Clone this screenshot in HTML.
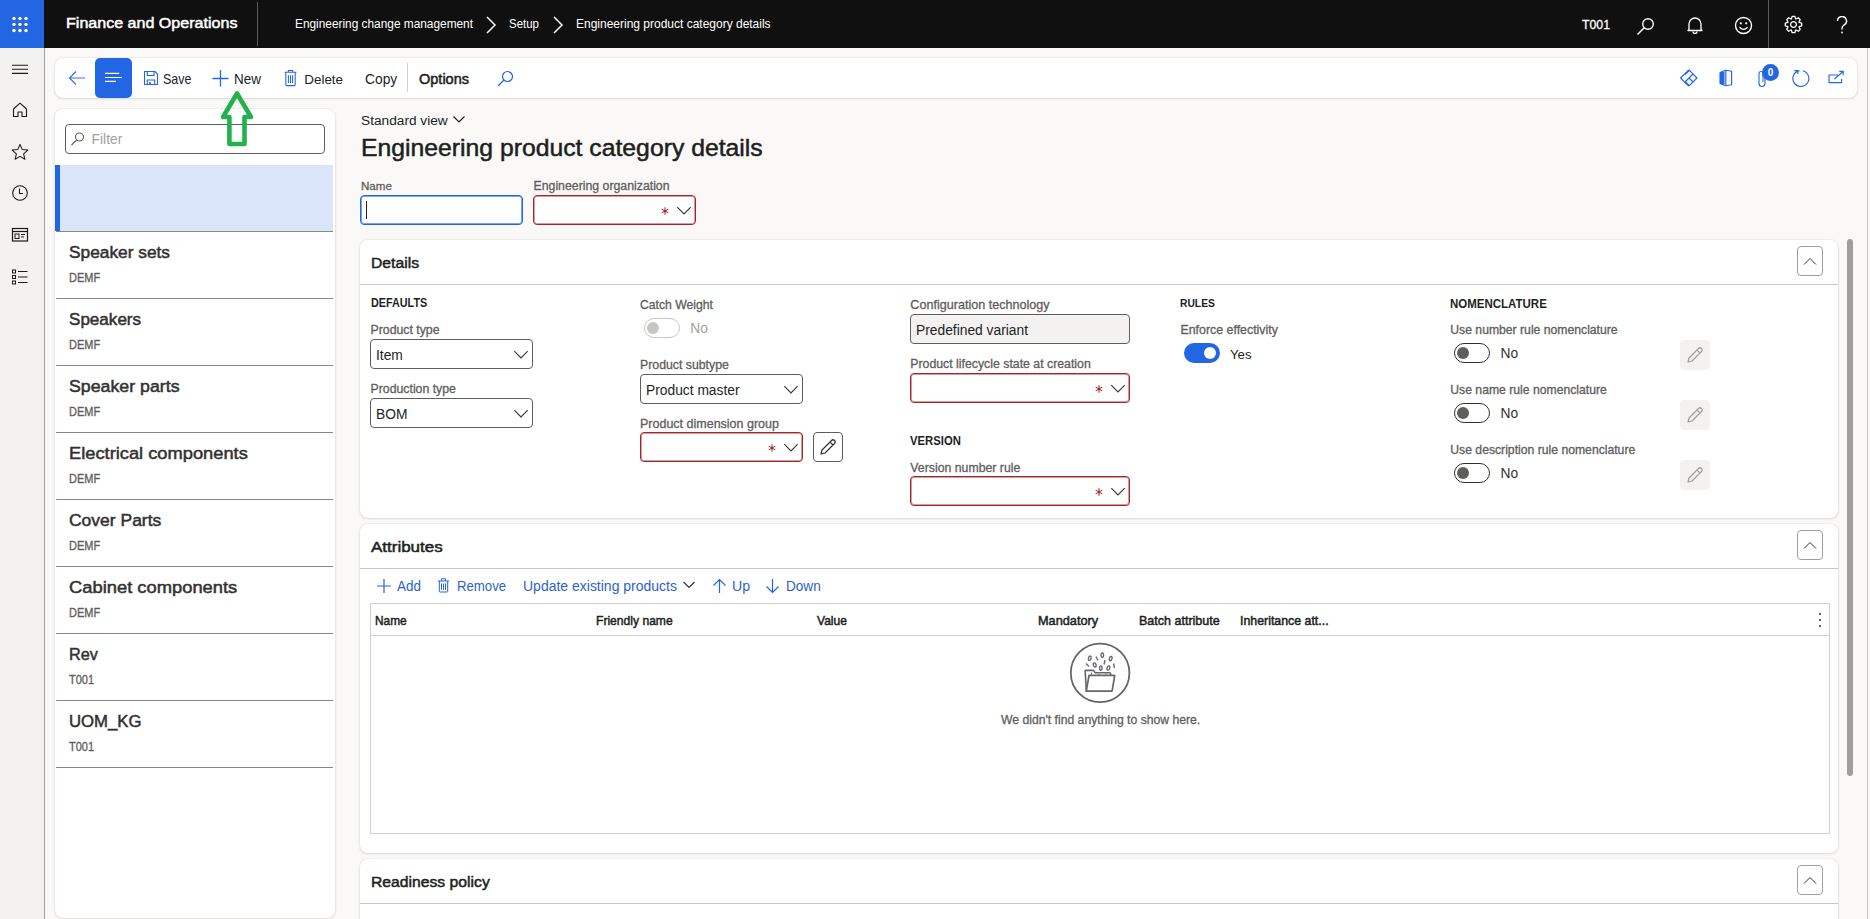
<!DOCTYPE html>
<html><head><meta charset="utf-8">
<style>
*{box-sizing:border-box;margin:0;padding:0}
html,body{width:1870px;height:919px;overflow:hidden;background:#faf9f8;font-family:"Liberation Sans",sans-serif;color:#201f1e;position:relative}
.a{position:absolute}
.t{position:absolute;white-space:nowrap;line-height:1}
.card{position:absolute;background:#fff;border-radius:8px;box-shadow:0 0 2px rgba(0,0,0,.12),0 1px 3px rgba(0,0,0,.10)}
</style></head><body>
<div class="a" style="left:0px;top:0px;width:1870px;height:48px;background:#111010"></div>
<div class="a" style="left:0px;top:0px;width:44px;height:48px;background:#2266e3"></div>
<svg class="a" style="left:0px;top:0px;" width="44" height="48" viewBox="0 0 44 48"><circle cx="14" cy="18.5" r="1.7" fill="#fff"/><circle cx="14" cy="24.5" r="1.7" fill="#fff"/><circle cx="14" cy="30.5" r="1.7" fill="#fff"/><circle cx="20" cy="18.5" r="1.7" fill="#fff"/><circle cx="20" cy="24.5" r="1.7" fill="#fff"/><circle cx="20" cy="30.5" r="1.7" fill="#fff"/><circle cx="26" cy="18.5" r="1.7" fill="#fff"/><circle cx="26" cy="24.5" r="1.7" fill="#fff"/><circle cx="26" cy="30.5" r="1.7" fill="#fff"/></svg>
<div class="t" style="left:66px;top:15.48px;font-size:15.5px;color:#fff;transform:scaleX(1.0363);transform-origin:0 0;-webkit-text-stroke:0.5px #fff;">Finance and Operations</div>
<div class="a" style="left:257px;top:2px;width:1px;height:44px;background:#5a5a5a"></div>
<div class="t" style="left:295px;top:18.00px;font-size:12.4px;color:#fff;transform:scaleX(0.9571);transform-origin:0 0;">Engineering change management</div>
<svg class="a" style="left:484px;top:16px;" width="14" height="18" viewBox="0 0 14 18"><path d="M3 1 L11 9 L3 17" fill="none" stroke="#fff" stroke-width="1.5"/></svg>
<div class="t" style="left:509px;top:18.00px;font-size:12.4px;color:#fff;transform:scaleX(0.9266);transform-origin:0 0;">Setup</div>
<svg class="a" style="left:551px;top:16px;" width="14" height="18" viewBox="0 0 14 18"><path d="M3 1 L11 9 L3 17" fill="none" stroke="#fff" stroke-width="1.5"/></svg>
<div class="t" style="left:576px;top:18.00px;font-size:12.4px;color:#fff;transform:scaleX(0.9676);transform-origin:0 0;">Engineering product category details</div>
<div class="t" style="left:1582px;top:18.35px;font-size:13.530000000000001px;color:#fff;-webkit-text-stroke:0.3px #fff;transform:scaleX(0.9091);transform-origin:0 0;">T001</div>
<svg class="a" style="left:1636px;top:16px;" width="20" height="20" viewBox="0 0 20 20"><circle cx="12" cy="8" r="5.3" fill="none" stroke="#fff" stroke-width="1.4"/><path d="M8.2 11.8 L1.5 18.5" stroke="#fff" stroke-width="1.5"/></svg>
<svg class="a" style="left:1686px;top:16px;" width="18" height="18" viewBox="0 0 18 18"><path d="M3 13.5 V8 A6 6 0 0 1 15 8 V13.5 L16 14.5 H2 Z" fill="none" stroke="#fff" stroke-width="1.3" stroke-linejoin="round"/><path d="M7 15.5 A2 2 0 0 0 11 15.5" fill="none" stroke="#fff" stroke-width="1.3"/></svg>
<svg class="a" style="left:1734px;top:16px;" width="20" height="20" viewBox="0 0 20 20"><circle cx="9.5" cy="9.5" r="8" fill="none" stroke="#fff" stroke-width="1.4"/><circle cx="6.8" cy="7.3" r="1.1" fill="#fff"/><circle cx="12.2" cy="7.3" r="1.1" fill="#fff"/><path d="M5.5 11.2 Q9.5 15.5 13.5 11.2" fill="none" stroke="#fff" stroke-width="1.3"/></svg>
<div class="a" style="left:1768px;top:0px;width:1px;height:48px;background:#5a5a5a"></div>
<svg class="a" style="left:1784px;top:15.4px;" width="20" height="20" viewBox="0 0 20 20"><g transform="translate(9.5,9.5)" fill="none" stroke="#fff" stroke-width="1.3"><polygon points="8.19,-1.32 8.19,1.32 5.62,2.11 5.47,2.48 6.73,4.86 4.86,6.73 2.48,5.47 2.11,5.62 1.32,8.19 -1.32,8.19 -2.11,5.62 -2.48,5.47 -4.86,6.73 -6.73,4.86 -5.47,2.48 -5.62,2.11 -8.19,1.32 -8.19,-1.32 -5.62,-2.11 -5.47,-2.48 -6.73,-4.86 -4.86,-6.73 -2.48,-5.47 -2.11,-5.62 -1.32,-8.19 1.32,-8.19 2.11,-5.62 2.48,-5.47 4.86,-6.73 6.73,-4.86 5.47,-2.48 5.62,-2.11" stroke-linejoin="round"/><circle r="2.9"/></g></svg>
<svg class="a" style="left:1834px;top:16px;" width="16" height="18" viewBox="0 0 16 18"><path d="M3.5 5 A4.5 4.5 0 1 1 10 9 Q8 10.3 8 12.5 V13.5" fill="none" stroke="#fff" stroke-width="1.4"/><circle cx="8" cy="16.5" r="0.9" fill="#fff"/></svg>
<div class="a" style="left:0px;top:48px;width:45px;height:871px;background:#f3f2f1;border-right:1px solid #a19f9d"></div>
<svg class="a" style="left:10px;top:60px;" width="24" height="20" viewBox="0 0 24 20"><path d="M2 5.3H18 M2 9.3H18 M2 13.4H18" stroke="#1b1a19" stroke-width="1.1"/></svg>
<svg class="a" style="left:10px;top:101px;" width="24" height="18" viewBox="0 0 24 18"><path d="M3.5 8 L10 2.2 L16.5 8 V15.5 H12 V11 H8 V15.5 H3.5 Z" fill="none" stroke="#1b1a19" stroke-width="1.1" stroke-linejoin="round"/></svg>
<svg class="a" style="left:10px;top:143px;" width="24" height="18" viewBox="0 0 24 18"><path d="M10 1.5 L12.3 6.6 L17.8 7.1 L13.6 10.8 L14.9 16.3 L10 13.4 L5.1 16.3 L6.4 10.8 L2.2 7.1 L7.7 6.6 Z" fill="none" stroke="#1b1a19" stroke-width="1.05" stroke-linejoin="round"/></svg>
<svg class="a" style="left:10px;top:184px;" width="24" height="18" viewBox="0 0 24 18"><circle cx="10" cy="9" r="7.3" fill="none" stroke="#1b1a19" stroke-width="1.1"/><path d="M9.5 4.5 V9.5 H13" fill="none" stroke="#1b1a19" stroke-width="1.1"/></svg>
<svg class="a" style="left:10px;top:226px;" width="24" height="18" viewBox="0 0 24 18"><rect x="2.5" y="2.5" width="15" height="12.5" fill="none" stroke="#1b1a19" stroke-width="1.2"/><path d="M2.5 5.5H17.5" stroke="#1b1a19" stroke-width="1.2"/><rect x="5" y="8" width="4" height="4.5" fill="none" stroke="#1b1a19" stroke-width="1"/><path d="M11 8.5H15 M11 11H14" stroke="#1b1a19" stroke-width="1"/></svg>
<svg class="a" style="left:10px;top:268px;" width="24" height="18" viewBox="0 0 24 18"><rect x="2.5" y="2" width="3" height="3" fill="none" stroke="#1b1a19" stroke-width="1"/><rect x="2.5" y="7.5" width="3" height="3" fill="none" stroke="#1b1a19" stroke-width="1"/><rect x="2.5" y="13" width="3" height="3" fill="none" stroke="#1b1a19" stroke-width="1"/><path d="M8 3.5H17.5 M8 9H17.5 M8 14.5H17.5" stroke="#1b1a19" stroke-width="1.2"/></svg>
<div class="a" style="left:1867px;top:48px;width:1px;height:871px;background:#c8c6c4"></div>
<div class="card" style="left:55px;top:58px;width:1802px;height:40px"></div>
<svg class="a" style="left:66px;top:68px;" width="24" height="20" viewBox="0 0 24 20"><path d="M4 10 H19 M10 3.5 L3.5 10 L10 16.5" fill="none" stroke="#3f6ee6" stroke-width="1.2"/></svg>
<div class="a" style="left:95px;top:58px;width:37px;height:40px;background:#2266e3;border-radius:5px"></div>
<svg class="a" style="left:104px;top:68px;" width="20" height="20" viewBox="0 0 20 20"><path d="M1 5.4H15.2 M1 9.5H17.9 M1 13.4H11.9" stroke="#fff" stroke-width="1.2"/></svg>
<svg class="a" style="left:143px;top:70px;" width="16" height="16" viewBox="0 0 16 16"><path d="M1.5 1.5 H12 L14.5 4 V14.5 H1.5 Z" fill="none" stroke="#2266e3" stroke-width="1.1"/><path d="M4.3 1.5 V5.5 H11 V1.5" fill="none" stroke="#2266e3" stroke-width="1.1"/><path d="M4.3 14.5 V10 H11.7 V14.5" fill="none" stroke="#2266e3" stroke-width="1.1"/><rect x="6.2" y="12" width="1.6" height="2.5" fill="#2266e3"/></svg>
<div class="t" style="left:163px;top:72.66px;font-size:13.750000000000002px;color:#201f1e;transform:scaleX(0.9091);transform-origin:0 0;">Save</div>
<svg class="a" style="left:211px;top:69px;" width="20" height="20" viewBox="0 0 20 20"><path d="M9.5 1 V17.5 M1.5 9.5 H17.5" stroke="#2266e3" stroke-width="1.3"/></svg>
<div class="t" style="left:234.4px;top:72.30px;font-size:14.175px;color:#201f1e;transform:scaleX(0.9524);transform-origin:0 0;">New</div>
<svg class="a" style="left:280px;top:66px;" width="20" height="22" viewBox="0 0 20 22"><g fill="none" stroke="#2266e3" stroke-width="1.05"><path d="M4.5 6.3 H16.5 M8.3 6 V4.4 H12.7 V6"/><path d="M5.8 6.3 V18.8 Q5.8 19.6 6.6 19.6 H14.4 Q15.2 19.6 15.2 18.8 V6.3"/><path d="M8.4 9.3 V17 M10.5 9.3 V17 M12.6 9.3 V17"/></g></svg>
<div class="t" style="left:304.3px;top:73.26px;font-size:13.4px;color:#201f1e;">Delete</div>
<div class="t" style="left:365.3px;top:72.27px;font-size:14.214px;color:#201f1e;transform:scaleX(0.9709);transform-origin:0 0;">Copy</div>
<div class="a" style="left:407px;top:63px;width:1px;height:29px;background:#d2d0ce"></div>
<div class="t" style="left:419px;top:72.28px;font-size:14.2px;color:#201f1e;transform:scaleX(1.0227);transform-origin:0 0;-webkit-text-stroke:0.5px #201f1e;">Options</div>
<svg class="a" style="left:496px;top:69px;" width="20" height="20" viewBox="0 0 20 20"><circle cx="11.5" cy="7.5" r="5" fill="none" stroke="#2266e3" stroke-width="1.2"/><path d="M8 11 L2 17" stroke="#2266e3" stroke-width="1.3"/></svg>
<svg class="a" style="left:1670px;top:60px;" width="180" height="35" viewBox="0 0 180 35"><g fill="none" stroke="#2266e3" stroke-width="1.15" stroke-linejoin="round"><path d="M10.6 18 L18.2 10.4 H19.4 L27 18 L19.4 25.6 H18.2 Z"/><path d="M19.2 10.6 L15 14.5 M19 18 L23 14 M19 18 L23 22 M19 18 L15 22 M19.2 25.4 L15 21.5"/><path d="M50.5 12.3 L55.8 10.2 L61.6 11.3 V24.7 L55.8 25.8 L50.5 23.7 Z"/><path d="M55.8 10.2 V25.8"/><path d="M50.3 12.3 L54.5 11.6 V24.4 L50.3 23.7 Z" fill="#2266e3" stroke="none"/><path d="M50.5 12.3 V23.7" stroke-width="2"/><path d="M129.5 10.6 A8 8 0 1 0 132.9 10.75"/><path d="M124.3 10.6 H127.8 V14"/><path d="M168 15 H159 V22.6 H171.6 V19"/><path d="M164.5 19 L173 11.5 M169.2 11.3 H173.2 V15.2"/></g></svg>
<svg class="a" style="left:1757px;top:69px;" width="12" height="20" viewBox="0 0 12 20"><path d="M8 6 V14.5 A3 3 0 0 1 2 14.5 V4.5 A2 2 0 0 1 6 4.5 V13" fill="none" stroke="#2266e3" stroke-width="1.1"/></svg>
<svg class="a" style="left:1760px;top:62px;" width="22" height="22" viewBox="0 0 22 22"><circle cx="10.5" cy="10.4" r="8.5" fill="#2266e3"/><text x="10.5" y="14" font-size="10" font-family="Liberation Sans" font-weight="bold" fill="#fff" text-anchor="middle">0</text></svg>
<div class="card" style="left:55px;top:109px;width:280px;height:809px"></div>
<div class="a" style="left:65px;top:124px;width:260px;height:30px;border:1px solid #605e5c;border-radius:4px;background:#fff"></div>
<svg class="a" style="left:70px;top:131px;" width="16" height="16" viewBox="0 0 16 16"><circle cx="9.5" cy="6" r="4" fill="none" stroke="#605e5c" stroke-width="1.1"/><path d="M6.7 8.8 L1.5 14" stroke="#605e5c" stroke-width="1.2"/></svg>
<div class="t" style="left:91.6px;top:133.02px;font-size:13.8px;color:#a19f9d;">Filter</div>
<div class="a" style="left:55px;top:165px;width:278px;height:66px;background:#dae5fa"></div>
<div class="a" style="left:55px;top:165px;width:5px;height:66px;background:#2266e3"></div>
<div class="a" style="left:56px;top:231px;width:277px;height:1px;background:#8a8886"></div>
<div class="a" style="left:56px;top:298px;width:277px;height:1px;background:#8a8886"></div>
<div class="a" style="left:56px;top:365px;width:277px;height:1px;background:#8a8886"></div>
<div class="a" style="left:56px;top:432px;width:277px;height:1px;background:#8a8886"></div>
<div class="a" style="left:56px;top:499px;width:277px;height:1px;background:#8a8886"></div>
<div class="a" style="left:56px;top:566px;width:277px;height:1px;background:#8a8886"></div>
<div class="a" style="left:56px;top:633px;width:277px;height:1px;background:#8a8886"></div>
<div class="a" style="left:56px;top:700px;width:277px;height:1px;background:#8a8886"></div>
<div class="a" style="left:56px;top:767px;width:277px;height:1px;background:#8a8886"></div>
<div class="t" style="left:69px;top:244.14px;font-size:17.2px;color:#323130;transform:scaleX(1.0065);transform-origin:0 0;-webkit-text-stroke:0.5px #323130;">Speaker sets</div>
<div class="t" style="left:69px;top:271.85px;font-size:11.99px;color:#605e5c;transform:scaleX(0.9174);transform-origin:0 0;-webkit-text-stroke:0.3px #605e5c;">DEMF</div>
<div class="t" style="left:69px;top:311.14px;font-size:17.2px;color:#323130;transform:scaleX(0.9928);transform-origin:0 0;-webkit-text-stroke:0.5px #323130;">Speakers</div>
<div class="t" style="left:69px;top:338.85px;font-size:11.99px;color:#605e5c;transform:scaleX(0.9174);transform-origin:0 0;-webkit-text-stroke:0.3px #605e5c;">DEMF</div>
<div class="t" style="left:69px;top:378.14px;font-size:17.2px;color:#323130;transform:scaleX(1.0333);transform-origin:0 0;-webkit-text-stroke:0.5px #323130;">Speaker parts</div>
<div class="t" style="left:69px;top:405.85px;font-size:11.99px;color:#605e5c;transform:scaleX(0.9174);transform-origin:0 0;-webkit-text-stroke:0.3px #605e5c;">DEMF</div>
<div class="t" style="left:69px;top:445.14px;font-size:17.2px;color:#323130;transform:scaleX(1.0633);transform-origin:0 0;-webkit-text-stroke:0.5px #323130;">Electrical components</div>
<div class="t" style="left:69px;top:472.85px;font-size:11.99px;color:#605e5c;transform:scaleX(0.9174);transform-origin:0 0;-webkit-text-stroke:0.3px #605e5c;">DEMF</div>
<div class="t" style="left:69px;top:512.14px;font-size:17.2px;color:#323130;transform:scaleX(1.0171);transform-origin:0 0;-webkit-text-stroke:0.5px #323130;">Cover Parts</div>
<div class="t" style="left:69px;top:539.85px;font-size:11.99px;color:#605e5c;transform:scaleX(0.9174);transform-origin:0 0;-webkit-text-stroke:0.3px #605e5c;">DEMF</div>
<div class="t" style="left:69px;top:579.14px;font-size:17.2px;color:#323130;transform:scaleX(1.0673);transform-origin:0 0;-webkit-text-stroke:0.5px #323130;">Cabinet components</div>
<div class="t" style="left:69px;top:606.85px;font-size:11.99px;color:#605e5c;transform:scaleX(0.9174);transform-origin:0 0;-webkit-text-stroke:0.3px #605e5c;">DEMF</div>
<div class="t" style="left:69px;top:646.14px;font-size:17.2px;color:#323130;transform:scaleX(0.9456);transform-origin:0 0;-webkit-text-stroke:0.5px #323130;">Rev</div>
<div class="t" style="left:69px;top:673.85px;font-size:11.99px;color:#605e5c;transform:scaleX(0.9174);transform-origin:0 0;-webkit-text-stroke:0.3px #605e5c;">T001</div>
<div class="t" style="left:69px;top:713.14px;font-size:17.2px;color:#323130;transform:scaleX(0.9732);transform-origin:0 0;-webkit-text-stroke:0.5px #323130;">UOM_KG</div>
<div class="t" style="left:69px;top:740.85px;font-size:11.99px;color:#605e5c;transform:scaleX(0.9174);transform-origin:0 0;-webkit-text-stroke:0.3px #605e5c;">T001</div>
<div class="t" style="left:361px;top:113.60px;font-size:13.7px;color:#201f1e;">Standard view</div>
<svg class="a" style="left:451px;top:113px;" width="16" height="12" viewBox="0 0 16 12"><path d="M2.5 3.5 L8 9 L13.5 3.5" fill="none" stroke="#201f1e" stroke-width="1.2"/></svg>
<div class="t" style="left:361px;top:136.13px;font-size:24.3px;color:#201f1e;transform:scaleX(1.0184);transform-origin:0 0;-webkit-text-stroke:0.5px #201f1e;">Engineering product category details</div>
<div class="t" style="left:361px;top:180.18px;font-size:11.6px;color:#605e5c;-webkit-text-stroke:0.3px #605e5c;">Name</div>
<div class="t" style="left:533.5px;top:179.59px;font-size:12.3px;color:#605e5c;-webkit-text-stroke:0.3px #605e5c;">Engineering organization</div>
<div class="a" style="left:360px;top:195px;width:163px;height:30px;border:1px solid #2266e3;box-shadow:inset 0 0 0 1px rgba(34,102,227,.6);border-radius:4px;background:#fff"></div>
<div class="a" style="left:366px;top:201px;width:1px;height:18px;background:#201f1e"></div>
<div class="a" style="left:533px;top:195px;width:163px;height:30px;border:1px solid #a4262c;border-radius:4px;background:#fff;box-shadow:inset 0 0 0 1px rgba(164,38,44,.45);"></div>
<svg class="a" style="left:676px;top:205px;" width="17" height="12" viewBox="0 0 17 12"><path d="M1.3 2.2 L8 8.9 L14.7 2.2" fill="none" stroke="#323130" stroke-width="1.05"/></svg>
<svg class="a" style="left:660px;top:205.5px;" width="10" height="10" viewBox="0 0 10 10"><g stroke="#a4262c" stroke-width="1.05"><path d="M5 1.2 V8.8 M1.7 3.1 L8.3 6.9 M8.3 3.1 L1.7 6.9"/></g></svg>
<div class="card" style="left:360px;top:240px;width:1478px;height:278px"></div>
<div class="t" style="left:370.5px;top:255.33px;font-size:15.2px;color:#201f1e;transform:scaleX(1.0336);transform-origin:0 0;-webkit-text-stroke:0.5px #201f1e;">Details</div>
<div class="a" style="left:360px;top:284px;width:1478px;height:1px;background:#c8c6c4"></div>
<div class="a" style="left:1797px;top:246px;width:26px;height:30px;border:1px solid #a19f9d;border-radius:4px;background:#fff"></div>
<svg class="a" style="left:1802px;top:255.5px;" width="16" height="12" viewBox="0 0 16 12"><path d="M2 8.5 L8 2.5 L14 8.5" fill="none" stroke="#323130" stroke-width="1"/></svg>
<div class="t" style="left:370.5px;top:297.94px;font-size:11.880000000000003px;font-weight:bold;color:#201f1e;transform:scaleX(0.9091);transform-origin:0 0;">DEFAULTS</div>
<div class="t" style="left:370.5px;top:323.59px;font-size:12.3px;color:#605e5c;-webkit-text-stroke:0.3px #605e5c;">Product type</div>
<div class="a" style="left:370px;top:339px;width:163px;height:30px;border:1px solid #605e5c;border-radius:4px;background:#fff;"></div>
<div class="t" style="left:376px;top:348.92px;font-size:13.8px;color:#201f1e;">Item</div>
<svg class="a" style="left:513px;top:349px;" width="17" height="12" viewBox="0 0 17 12"><path d="M1.3 2.2 L8 8.9 L14.7 2.2" fill="none" stroke="#323130" stroke-width="1.05"/></svg>
<div class="t" style="left:370.5px;top:382.59px;font-size:12.3px;color:#605e5c;-webkit-text-stroke:0.3px #605e5c;">Production type</div>
<div class="a" style="left:370px;top:398px;width:163px;height:30px;border:1px solid #605e5c;border-radius:4px;background:#fff;"></div>
<div class="t" style="left:376px;top:407.92px;font-size:13.8px;color:#201f1e;">BOM</div>
<svg class="a" style="left:513px;top:408px;" width="17" height="12" viewBox="0 0 17 12"><path d="M1.3 2.2 L8 8.9 L14.7 2.2" fill="none" stroke="#323130" stroke-width="1.05"/></svg>
<div class="t" style="left:640px;top:298.67px;font-size:12.2px;color:#605e5c;-webkit-text-stroke:0.3px #605e5c;">Catch Weight</div>
<div class="a" style="left:644px;top:318px;width:36px;height:20px;border:1px solid #c8c6c4;border-radius:10px;background:#fff"></div>
<div class="a" style="left:647px;top:322px;width:12px;height:12px;border-radius:6px;background:#c8c6c4"></div>
<div class="t" style="left:690.3px;top:322.32px;font-size:13.8px;color:#a19f9d;">No</div>
<div class="t" style="left:640px;top:359.39px;font-size:12.3px;color:#605e5c;-webkit-text-stroke:0.3px #605e5c;">Product subtype</div>
<div class="a" style="left:640px;top:374px;width:163px;height:30px;border:1px solid #605e5c;border-radius:4px;background:#fff;"></div>
<div class="t" style="left:646px;top:383.92px;font-size:13.8px;color:#201f1e;">Product master</div>
<svg class="a" style="left:783px;top:384px;" width="17" height="12" viewBox="0 0 17 12"><path d="M1.3 2.2 L8 8.9 L14.7 2.2" fill="none" stroke="#323130" stroke-width="1.05"/></svg>
<div class="t" style="left:640px;top:418.42px;font-size:12.5px;color:#605e5c;-webkit-text-stroke:0.3px #605e5c;">Product dimension group</div>
<div class="a" style="left:640px;top:432px;width:163px;height:30px;border:1px solid #a4262c;border-radius:4px;background:#fff;box-shadow:inset 0 0 0 1px rgba(164,38,44,.45);"></div>
<svg class="a" style="left:783px;top:442px;" width="17" height="12" viewBox="0 0 17 12"><path d="M1.3 2.2 L8 8.9 L14.7 2.2" fill="none" stroke="#323130" stroke-width="1.05"/></svg>
<svg class="a" style="left:767px;top:442.5px;" width="10" height="10" viewBox="0 0 10 10"><g stroke="#a4262c" stroke-width="1.05"><path d="M5 1.2 V8.8 M1.7 3.1 L8.3 6.9 M8.3 3.1 L1.7 6.9"/></g></svg>
<div class="a" style="left:813px;top:432px;width:30px;height:30px;border:1px solid #605e5c;border-radius:4px;background:#fff"></div>
<svg class="a" style="left:818px;top:437px;" width="20" height="20" viewBox="0 0 20 20"><path d="M3 17 L4 13 L13.5 3.5 A1.8 1.8 0 0 1 16.5 6.5 L7 16 Z M12 5 L15 8" fill="none" stroke="#323130" stroke-width="1.2" stroke-linejoin="round"/></svg>
<div class="t" style="left:910.3px;top:299.33px;font-size:12.6px;color:#605e5c;-webkit-text-stroke:0.3px #605e5c;">Configuration technology</div>
<div class="a" style="left:910px;top:314px;width:220px;height:30px;border:1px solid #605e5c;border-radius:4px;background:#f3f2f1;"></div>
<div class="t" style="left:916px;top:323.92px;font-size:13.8px;color:#201f1e;">Predefined variant</div>
<div class="t" style="left:910.3px;top:358.39px;font-size:12.3px;color:#605e5c;-webkit-text-stroke:0.3px #605e5c;">Product lifecycle state at creation</div>
<div class="a" style="left:910px;top:373px;width:220px;height:30px;border:1px solid #a4262c;border-radius:4px;background:#fff;box-shadow:inset 0 0 0 1px rgba(164,38,44,.45);"></div>
<svg class="a" style="left:1110px;top:383px;" width="17" height="12" viewBox="0 0 17 12"><path d="M1.3 2.2 L8 8.9 L14.7 2.2" fill="none" stroke="#323130" stroke-width="1.05"/></svg>
<svg class="a" style="left:1094px;top:383.5px;" width="10" height="10" viewBox="0 0 10 10"><g stroke="#a4262c" stroke-width="1.05"><path d="M5 1.2 V8.8 M1.7 3.1 L8.3 6.9 M8.3 3.1 L1.7 6.9"/></g></svg>
<div class="t" style="left:910.3px;top:435.76px;font-size:11.865000000000002px;font-weight:bold;color:#201f1e;transform:scaleX(0.9524);transform-origin:0 0;">VERSION</div>
<div class="t" style="left:910.3px;top:461.89px;font-size:12.3px;color:#605e5c;-webkit-text-stroke:0.3px #605e5c;">Version number rule</div>
<div class="a" style="left:910px;top:476px;width:220px;height:30px;border:1px solid #a4262c;border-radius:4px;background:#fff;box-shadow:inset 0 0 0 1px rgba(164,38,44,.45);"></div>
<svg class="a" style="left:1110px;top:486px;" width="17" height="12" viewBox="0 0 17 12"><path d="M1.3 2.2 L8 8.9 L14.7 2.2" fill="none" stroke="#323130" stroke-width="1.05"/></svg>
<svg class="a" style="left:1094px;top:486.5px;" width="10" height="10" viewBox="0 0 10 10"><g stroke="#a4262c" stroke-width="1.05"><path d="M5 1.2 V8.8 M1.7 3.1 L8.3 6.9 M8.3 3.1 L1.7 6.9"/></g></svg>
<div class="t" style="left:1180.4px;top:298.03px;font-size:11.536000000000001px;font-weight:bold;color:#201f1e;transform:scaleX(0.8929);transform-origin:0 0;">RULES</div>
<div class="t" style="left:1180.4px;top:324.00px;font-size:12.4px;color:#605e5c;-webkit-text-stroke:0.3px #605e5c;">Enforce effectivity</div>
<div class="a" style="left:1184px;top:343px;width:36px;height:20px;border-radius:10px;background:#2266e3"></div>
<div class="a" style="left:1204px;top:347px;width:12px;height:12px;border-radius:6px;background:#fff"></div>
<div class="t" style="left:1230px;top:347.63px;font-size:13.2px;color:#201f1e;">Yes</div>
<div class="t" style="left:1450.3px;top:297.78px;font-size:12.075000000000001px;font-weight:bold;color:#201f1e;transform:scaleX(0.9524);transform-origin:0 0;">NOMENCLATURE</div>
<div class="t" style="left:1450.3px;top:323.57px;font-size:12.2px;color:#605e5c;-webkit-text-stroke:0.3px #605e5c;">Use number rule nomenclature</div>
<div class="a" style="left:1454px;top:343px;width:36px;height:20px;border:1px solid #323130;border-radius:10px;background:#fff"></div>
<div class="a" style="left:1457px;top:347px;width:12px;height:12px;border-radius:6px;background:#605e5c"></div>
<div class="t" style="left:1500.6px;top:347.12px;font-size:13.8px;color:#323130;">No</div>
<div class="a" style="left:1680px;top:340px;width:30px;height:30px;border-radius:4px;background:#f3f2f1"></div>
<svg class="a" style="left:1685px;top:345px;" width="20" height="20" viewBox="0 0 20 20"><path d="M3 17 L4 13 L13.5 3.5 A1.8 1.8 0 0 1 16.5 6.5 L7 16 Z M12 5 L15 8" fill="none" stroke="#a19f9d" stroke-width="1.2" stroke-linejoin="round"/></svg>
<div class="t" style="left:1450.3px;top:383.57px;font-size:12.2px;color:#605e5c;-webkit-text-stroke:0.3px #605e5c;">Use name rule nomenclature</div>
<div class="a" style="left:1454px;top:403px;width:36px;height:20px;border:1px solid #323130;border-radius:10px;background:#fff"></div>
<div class="a" style="left:1457px;top:407px;width:12px;height:12px;border-radius:6px;background:#605e5c"></div>
<div class="t" style="left:1500.6px;top:407.12px;font-size:13.8px;color:#323130;">No</div>
<div class="a" style="left:1680px;top:400px;width:30px;height:30px;border-radius:4px;background:#f3f2f1"></div>
<svg class="a" style="left:1685px;top:405px;" width="20" height="20" viewBox="0 0 20 20"><path d="M3 17 L4 13 L13.5 3.5 A1.8 1.8 0 0 1 16.5 6.5 L7 16 Z M12 5 L15 8" fill="none" stroke="#a19f9d" stroke-width="1.2" stroke-linejoin="round"/></svg>
<div class="t" style="left:1450.3px;top:443.57px;font-size:12.2px;color:#605e5c;-webkit-text-stroke:0.3px #605e5c;">Use description rule nomenclature</div>
<div class="a" style="left:1454px;top:463px;width:36px;height:20px;border:1px solid #323130;border-radius:10px;background:#fff"></div>
<div class="a" style="left:1457px;top:467px;width:12px;height:12px;border-radius:6px;background:#605e5c"></div>
<div class="t" style="left:1500.6px;top:467.12px;font-size:13.8px;color:#323130;">No</div>
<div class="a" style="left:1680px;top:460px;width:30px;height:30px;border-radius:4px;background:#f3f2f1"></div>
<svg class="a" style="left:1685px;top:465px;" width="20" height="20" viewBox="0 0 20 20"><path d="M3 17 L4 13 L13.5 3.5 A1.8 1.8 0 0 1 16.5 6.5 L7 16 Z M12 5 L15 8" fill="none" stroke="#a19f9d" stroke-width="1.2" stroke-linejoin="round"/></svg>
<div class="card" style="left:360px;top:524px;width:1478px;height:329px"></div>
<div class="t" style="left:370.5px;top:539.03px;font-size:15.2px;color:#201f1e;transform:scaleX(1.1173);transform-origin:0 0;-webkit-text-stroke:0.5px #201f1e;">Attributes</div>
<div class="a" style="left:360px;top:568px;width:1478px;height:1px;background:#c8c6c4"></div>
<div class="a" style="left:1797px;top:530px;width:26px;height:30px;border:1px solid #a19f9d;border-radius:4px;background:#fff"></div>
<svg class="a" style="left:1802px;top:539.5px;" width="16" height="12" viewBox="0 0 16 12"><path d="M2 8.5 L8 2.5 L14 8.5" fill="none" stroke="#323130" stroke-width="1"/></svg>
<svg class="a" style="left:376px;top:578px;" width="16" height="16" viewBox="0 0 16 16"><path d="M8 1 V15 M1 8 H15" stroke="#2266e3" stroke-width="1.2"/></svg>
<div class="t" style="left:396.9px;top:578.96px;font-size:14.580000000000002px;color:#2f5fcf;transform:scaleX(0.9259);transform-origin:0 0;">Add</div>
<svg class="a" style="left:436px;top:576px;" width="16" height="18" viewBox="0 0 16 18"><g fill="none" stroke="#2266e3" stroke-width="1"><path d="M2 5 H13 M5.5 4.8 V2.8 H9.5 V4.8"/><path d="M3.3 5 V15.3 Q3.3 16 4 16 H11 Q11.7 16 11.7 15.3 V5"/><path d="M5.5 7.5 V13.8 M7.5 7.5 V13.8 M9.5 7.5 V13.8"/></g></svg>
<div class="t" style="left:457px;top:579.01px;font-size:14.52px;color:#2f5fcf;transform:scaleX(0.9091);transform-origin:0 0;">Remove</div>
<div class="t" style="left:523.4px;top:578.86px;font-size:14.700000000000001px;color:#2f5fcf;transform:scaleX(0.9524);transform-origin:0 0;">Update existing products</div>
<svg class="a" style="left:682px;top:580px;" width="14" height="10" viewBox="0 0 14 10"><path d="M1.5 2 L7 7.5 L12.5 2" fill="none" stroke="#323130" stroke-width="1.2"/></svg>
<svg class="a" style="left:712px;top:578px;" width="16" height="16" viewBox="0 0 16 16"><path d="M7.5 15 V1.5 M1.5 7.5 L7.5 1.5 L13.5 7.5" fill="none" stroke="#2266e3" stroke-width="1.2"/></svg>
<div class="t" style="left:732px;top:578.77px;font-size:14.805px;color:#2f5fcf;transform:scaleX(0.9524);transform-origin:0 0;">Up</div>
<svg class="a" style="left:765px;top:578px;" width="16" height="16" viewBox="0 0 16 16"><path d="M7.5 1 V14.5 M1.5 8.5 L7.5 14.5 L13.5 8.5" fill="none" stroke="#2266e3" stroke-width="1.2"/></svg>
<div class="t" style="left:785.5px;top:578.87px;font-size:14.688px;color:#2f5fcf;transform:scaleX(0.9259);transform-origin:0 0;">Down</div>
<div class="a" style="left:370px;top:603px;width:1460px;height:231px;border:1px solid #d2d0ce;background:#fff"></div>
<div class="a" style="left:371px;top:635px;width:1458px;height:1px;background:#d2d0ce"></div>
<div class="t" style="left:375.3px;top:613.90px;font-size:13px;color:#201f1e;transform:scaleX(0.9139);transform-origin:0 0;-webkit-text-stroke:0.5px #201f1e;">Name</div>
<div class="t" style="left:596.3px;top:613.90px;font-size:13px;color:#201f1e;transform:scaleX(0.9309);transform-origin:0 0;-webkit-text-stroke:0.5px #201f1e;">Friendly name</div>
<div class="t" style="left:816.8px;top:613.90px;font-size:13px;color:#201f1e;transform:scaleX(0.9289);transform-origin:0 0;-webkit-text-stroke:0.5px #201f1e;">Value</div>
<div class="t" style="left:1038.2px;top:613.90px;font-size:13px;color:#201f1e;transform:scaleX(0.9799);transform-origin:0 0;-webkit-text-stroke:0.5px #201f1e;">Mandatory</div>
<div class="t" style="left:1139.3px;top:613.90px;font-size:13px;color:#201f1e;transform:scaleX(0.9625);transform-origin:0 0;-webkit-text-stroke:0.5px #201f1e;">Batch attribute</div>
<div class="t" style="left:1240px;top:613.90px;font-size:13px;color:#201f1e;transform:scaleX(0.9503);transform-origin:0 0;-webkit-text-stroke:0.5px #201f1e;">Inheritance att...</div>
<svg class="a" style="left:1815px;top:611px;" width="10" height="18" viewBox="0 0 10 18"><circle cx="5" cy="3" r="1" fill="#323130"/><circle cx="5" cy="9" r="1" fill="#323130"/><circle cx="5" cy="15" r="1" fill="#323130"/></svg>
<svg class="a" style="left:1065px;top:638px;" width="70" height="70" viewBox="0 0 70 70"><circle cx="35.1" cy="34.9" r="29.3" fill="none" stroke="#66656b" stroke-width="1.8"/><path d="M21.3 53.3 L20.2 33 Q20.2 32.4 20.8 32.4 H28.6 L30 34.7 H44.6 Q45.7 34.9 45.7 36 V37" fill="none" stroke="#66656b" stroke-width="1.6" stroke-linejoin="round"/><path d="M24 37.3 H49 Q49.8 37.4 49.6 38.2 L47.2 52.6 Q47.1 53.2 46.4 53.2 H21.3 Z" fill="#fff" stroke="#66656b" stroke-width="1.7" stroke-linejoin="round"/><path d="M26.5 36.5 V34.5 M34 37 V36 M41 36.8 V35.8" stroke="#66656b" stroke-width="1"/><g fill="none" stroke="#66656b" stroke-width="1.35"><ellipse cx="24.8" cy="20.2" rx="1.3" ry="2.2" transform="rotate(15 24.8 20.2)"/><ellipse cx="37.3" cy="17.1" rx="1.3" ry="2.3"/><ellipse cx="45.7" cy="20.6" rx="1.3" ry="2.2" transform="rotate(15 45.7 20.6)"/><ellipse cx="29.7" cy="27" rx="1.3" ry="2.2" transform="rotate(-15 29.7 27)"/><ellipse cx="35.8" cy="30" rx="1.3" ry="2.2"/><ellipse cx="43.4" cy="30" rx="1.3" ry="2.2" transform="rotate(15 43.4 30)"/><path d="M31 18.5 L33 22.5 M21 25.5 L24 28.5 M40 22 L39 26.5 M48.5 25.5 L49.5 30"/></g></svg>
<div class="t" style="left:1000.8px;top:713.14px;font-size:13.42px;color:#605e5c;transform:scaleX(0.9091);transform-origin:0 0;-webkit-text-stroke:0.3px #605e5c;">We didn't find anything to show here.</div>
<div class="card" style="left:360px;top:859px;width:1478px;height:200px"></div>
<div class="t" style="left:370.5px;top:874.43px;font-size:15.2px;color:#201f1e;transform:scaleX(1.0343);transform-origin:0 0;-webkit-text-stroke:0.5px #201f1e;">Readiness policy</div>
<div class="a" style="left:360px;top:903px;width:1478px;height:1px;background:#c8c6c4"></div>
<div class="a" style="left:1797px;top:865px;width:26px;height:30px;border:1px solid #a19f9d;border-radius:4px;background:#fff"></div>
<svg class="a" style="left:1802px;top:874.5px;" width="16" height="12" viewBox="0 0 16 12"><path d="M2 8.5 L8 2.5 L14 8.5" fill="none" stroke="#323130" stroke-width="1"/></svg>
<svg class="a" style="left:200px;top:80px;" width="70" height="80" viewBox="0 0 70 80"><path d="M37 13.5 L23 37 H29.4 V64 H44.5 V37 H51 Z" fill="none" stroke="#22b14c" stroke-width="4.6" stroke-linejoin="round"/></svg>
<div class="a" style="left:1847px;top:239px;width:6px;height:537px;background:#9e9e9e;border-radius:3px"></div>
</body></html>
